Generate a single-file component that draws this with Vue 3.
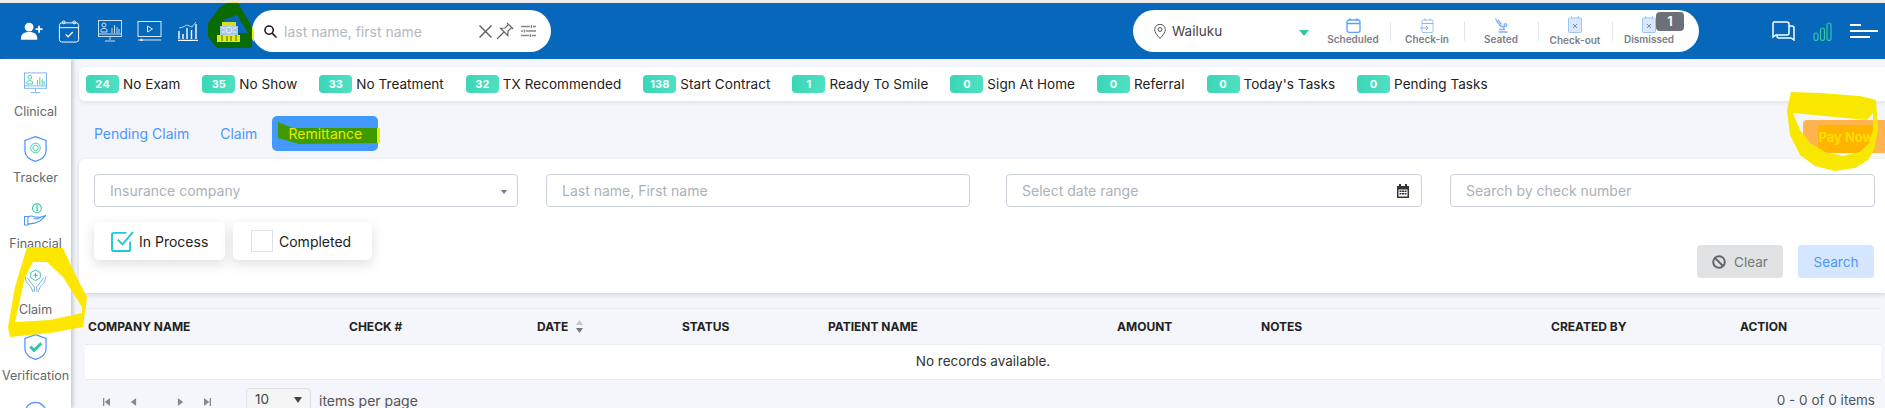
<template>
  <div class="app">
    <div class="strip"></div>

    <header class="topbar">
      <nav class="quick-icons">
        <svg class="q-user" viewBox="0 0 24 18" fill="#fff">
          <circle cx="9.500" cy="5" r="4.600" />
          <path d="M1 18c-.6-5.500 2.800-8 8.500-8s9 2.500 8.500 8z" />
          <path d="M19 3.500h1.800v2.700h2.700v1.800h-2.700v2.700H19V8h-2.700V6.200H19z" />
        </svg>
        <svg class="q-cal" viewBox="0 0 22 24" fill="none" stroke="#fff" stroke-width="1">
          <rect x="1" y="3" width="20" height="20" rx="2.500" />
          <path d="M1 8h20" />
          <circle cx="5.500" cy="2.500" r="1.500" /><circle cx="16.500" cy="2.500" r="1.500" />
          <path d="M7.500 15l2.500 2.500 5-5" stroke-width="1.300" />
        </svg>
        <svg class="q-mon" viewBox="0 0 24 22" fill="none" stroke="#dbe9f7" stroke-width=".9">
          <rect x=".5" y=".5" width="23" height="16" />
          <path d="M12 17v3M7 21h10M1 14h22" />
          <circle cx="6" cy="5" r="2" />
          <path d="M3 10c0-2 6-2 6 0v2H3zM14 13V8M16.500 13V5M19 13V7M21 13V9" />
        </svg>
        <svg class="q-vid" viewBox="0 0 24 20" fill="none" stroke="#dbe9f7" stroke-width="1">
          <rect x=".5" y=".5" width="23" height="15" />
          <path d="M10 5l5 3-5 3z" />
          <path d="M.5 19h23" /><circle cx="4" cy="19" r="1" fill="#dbe9f7" />
        </svg>
        <svg class="q-bars" viewBox="0 0 22 20" fill="none" stroke="#fff" stroke-width="1.400">
          <path d="M1 19.500h20" />
          <path d="M2 18V10M6 18V13M10 18V7M14.500 18V9M19 18V3" />
          <path d="M2 7l4-1 4-2 5 2 4-5" stroke-width=".7" />
        </svg>
      </nav>

      <div class="pill search-pill">
        <svg class="i-search" viewBox="0 0 14 14" fill="none" stroke="#111" stroke-width="1.600">
          <circle cx="5.500" cy="5.500" r="4.500" /><path d="M9 9l4.500 4.500" />
        </svg>
        <span class="search-text">last name, first name</span>
        <svg class="i-x" viewBox="0 0 13 13" fill="none" stroke="#666" stroke-width="1.500"><path d="M.5.500l12 12M12.500.500l-12 12" /></svg>
        <svg class="i-pin" viewBox="0 0 18 18" fill="none" stroke="#666" stroke-width="1.200">
          <path d="M11 .8l6.200 6.200M12.500 2.300L9 6 4.500 6.200l7.300 7.300L12 9l3.700-3.500M8 10l-7 7" />
        </svg>
        <svg class="i-sliders" viewBox="0 0 15 14" fill="none" stroke="#888" stroke-width="1.400">
          <path d="M0 2.500h9M12 2.500h3M0 7h2M5 7h10M0 11.500h8M11 11.500h4M10.500 1v3M3.500 5.500v3M9.500 10v3" />
        </svg>
      </div>

      <div class="pill status-pill">
        <svg class="i-loc" viewBox="0 0 12 15" fill="none" stroke="#555" stroke-width="1">
          <path d="M6 14.500C3 11 .7 8.500.7 5.600a5.300 5.300 0 0 1 10.600 0C11.300 8.500 9 11 6 14.500z" /><circle cx="6" cy="5.500" r="2" />
        </svg>
        <span class="loc-name">Wailuku</span>
        <span class="loc-caret"></span>
        <div class="status">
          <svg class="s-icon" viewBox="0 0 15 15" fill="none" stroke="#5aa0f8" stroke-width="1.300">
            <rect x="1" y="2" width="13" height="12.300" rx="2" />
            <path d="M1 5.500h13M4 .300v2M11 .300v2" />
          </svg>
          <span>Scheduled</span>
        </div>
        <div class="status sep">
          <svg class="s-icon" viewBox="0 0 15 15" fill="none" stroke="#9cc4f7" stroke-width="1">
            <rect x="2" y="2" width="11" height="12.500" rx="1" />
            <path d="M2 5.500h11M5 .500v2M10 .500v2M0 10h8M6 8l2 2-2 2" stroke="#86b5f5" />
          </svg>
          <span>Check-in</span>
        </div>
        <div class="status sep">
          <svg class="s-icon" viewBox="0 0 15 15" fill="none" stroke="#7fb2f6" stroke-width="1.300">
            <path d="M1.500.500l2 4 3.500 4h4.500M4 2l3.500 4.500" />
            <path d="M9 8.500l1.500 3H5M4.500 14h9" />
            <circle cx="11.500" cy="7" r="1.300" />
          </svg>
          <span>Seated</span>
        </div>
        <div class="status sep low">
          <svg class="s-icon tall" viewBox="0 0 14 17" fill="none" stroke="#9cc4f7" stroke-width="1">
            <rect x=".5" y="2" width="13" height="14.500" rx="1" fill="#d9e8fc" />
            <path d="M3.500 0v2.500M10.500 0v2.500" />
            <path d="M5 8l4 4M9 8l-4 4" stroke="#6f8fbd" />
          </svg>
          <span>Check-out</span>
        </div>
        <div class="status sep">
          <svg class="s-icon tall" viewBox="0 0 14 17" fill="none" stroke="#9cc4f7" stroke-width="1">
            <rect x=".5" y="2" width="13" height="14.500" rx="1" fill="#d9e8fc" />
            <path d="M3.500 0v2.500M10.500 0v2.500" />
            <path d="M5 8l4 4M9 8l-4 4" stroke="#6f8fbd" />
          </svg>
          <span>Dismissed</span>
        </div>
        <span class="count-badge">1</span>
      </div>

      <div class="right-icons">
        <svg class="r-chat" viewBox="0 0 24 20" fill="none" stroke="#fff" stroke-width="1.500">
          <path d="M3 1h13a2 2 0 0 1 2 2v9a2 2 0 0 1-2 2H5l-3 2V3a2 2 0 0 1 1-2z" />
          <path d="M18 5h3a2 2 0 0 1 2 2v12l-3-2H8a2 2 0 0 1-2-2v-1" />
        </svg>
        <svg class="r-bars" viewBox="0 0 19 19" fill="none" stroke="#2fc7a4" stroke-width="1.200">
          <rect x="1" y="11" width="4" height="7.500" rx="2" />
          <rect x="7.500" y="6" width="4" height="12.500" rx="2" />
          <rect x="14" y="1" width="4" height="17.500" rx="2" />
        </svg>
        <div class="r-menu"><i></i><i></i><i></i></div>
      </div>
    </header>

    <div class="body">
      <aside class="sidebar">
        <div class="side-item">
          <svg viewBox="0 0 24 22" fill="none" stroke="#6ea8f5" stroke-width=".9">
            <rect x=".5" y=".5" width="23" height="16" />
            <path d="M12 17v3M7 21h10M1 14h22" />
            <circle cx="6" cy="5" r="2" stroke="#2fc7a4" />
            <path d="M3 10c0-2 6-2 6 0v2H3zM14 13V8M16.500 13V5M19 13V7M21 13V9" stroke="#2fc7a4" />
          </svg>
          <span>Clinical</span>
        </div>
        <div class="side-item">
          <svg viewBox="0 0 24 28" fill="none" stroke="#4d94ff" stroke-width="1.300">
            <path d="M12 1l11 4v11c0 5-5 9-11 11C6 25 1 21 1 16V5z" />
            <circle cx="12" cy="13" r="5" stroke="#2fc7a4" stroke-width=".9" />
            <circle cx="12" cy="13" r="2.800" stroke="#2fc7a4" stroke-width=".9" />
          </svg>
          <span>Tracker</span>
        </div>
        <div class="side-item">
          <svg viewBox="0 0 24 24" fill="none" stroke="#4d94ff" stroke-width="1.100">
            <circle cx="13.500" cy="5" r="4.600" stroke="#2fc7a4" />
            <path d="M15 3c-2-.6-3 1.800-1.300 2.100s1.200 2.600-1 2M13.800 1.700v6.600" stroke="#2fc7a4" stroke-width=".8" />
            <path d="M.5 13.500h3.500v9H.5zM4 14.500c3-2.500 5-1.500 7-.5h3.500c1.500 0 1.500 2 0 2H10M15 15l8-2.500-6 5.500-6 2.500-7 1" />
          </svg>
          <span>Financial</span>
        </div>
        <div class="side-item">
          <svg viewBox="0 0 24 24" fill="none" stroke="#7fb2f6" stroke-width="1">
            <path d="M12 .500l5 2.800v5.400L12 11.500 7 8.700V3.300z" stroke="#2fc7a4" />
            <path d="M12 3.500v5M9.500 6h5" stroke="#2fc7a4" />
            <path d="M1 7l1.500 6 4.500 5 2.500 5.500M10.500 23.500l.5-5-4-5-3.500-5" stroke="#6fb5c8" />
            <path d="M23 7l-1.500 6-4.500 5-2.500 5.500M13.500 23.500l-.5-5 4-5 3.500-5" />
          </svg>
          <span>Claim</span>
        </div>
        <div class="side-item">
          <svg viewBox="0 0 24 28" fill="none" stroke="#4d94ff" stroke-width="1.300">
            <path d="M12 1l11 4v11c0 5-5 9-11 11C6 25 1 21 1 16V5z" />
            <path d="M6.500 13.500l4 4 7.500-7.500" stroke="#2fc7a4" stroke-width="3" />
          </svg>
          <span>Verification</span>
        </div>
        <div class="side-item">
          <svg viewBox="0 0 24 28" fill="none" stroke="#4d94ff" stroke-width="1.300">
            <circle cx="12" cy="14" r="11" />
          </svg>
        </div>
      </aside>

      <main class="main">
        <section class="summary">
          <div v-for="item in summary" :key="item.label" class="sum-item">
            <span class="sum-badge">{{ item.count }}</span>
            <span>{{ item.label }}</span>
          </div>
        </section>

        <div class="tabs-row">
          <span class="tab">Pending Claim</span>
          <span class="tab">Claim</span>
          <span class="tab active">
            <svg class="tab-mark" viewBox="0 0 108 24"><path d="M6 0l15 6h85l1 15-80 1L6 16z" fill="#3f9900" /><path d="M105 6h3l1 15h-4z" fill="#e6ee00" /></svg>
            <b>Remittance</b>
          </span>
          <button class="pay-now">Pay Now</button>
        </div>

        <section class="filters">
          <div class="filter-grid">
            <div class="field">
              <span class="ph">Insurance company</span>
              <span class="select-caret"></span>
            </div>
            <div class="field"><span class="ph">Last name, First name</span></div>
            <div class="field">
              <span class="ph">Select date range</span>
              <svg class="i-date" viewBox="0 0 12 14" fill="#333">
                <path d="M2 0h2v2h4V0h2v2h2v12H0V2h2zM1.500 5.500v7h9v-7z" />
                <path d="M2.500 6.500h2v1.500h-2zM5 6.500h2v1.500H5zM7.500 6.500h2v1.500h-2zM2.500 9h2v1.500h-2zM5 9h2v1.500H5zM7.500 9h2v1.500h-2z" />
              </svg>
            </div>
            <div class="field"><span class="ph">Search by check number</span></div>
          </div>

          <div class="filter-bottom">
            <div class="chips">
              <label class="chip first">
                <svg class="chk" viewBox="0 0 24 22" fill="none" stroke="#22c7d6" stroke-width="2">
                  <path d="M20 11v8a2 2 0 0 1-2 2H3a2 2 0 0 1-2-2V4a2 2 0 0 1 2-2h13" />
                  <path d="M7 9l5 5L23 1" />
                </svg>
                In Process
              </label>
              <label class="chip second"><span class="box"></span>Completed</label>
            </div>
            <div class="actions">
              <button class="btn-clear">
                <svg viewBox="0 0 14 14" fill="none" stroke="#666" stroke-width="2"><circle cx="7" cy="7" r="5.800" /><path d="M3 3l8 8" /></svg>
                Clear
              </button>
              <button class="btn-search">Search</button>
            </div>
          </div>
        </section>

        <section class="grid-wrap">
          <div class="grid-head">
            <span v-for="col in columns" :key="col.label" :style="{ width: col.width + 'px' }">
              {{ col.label }}
              <svg v-if="col.sort" class="i-sort" viewBox="0 0 7 13"><path d="M3.500 0L7 5H0z" fill="#c3c7cf" /><path d="M3.500 13L0 8h7z" fill="#777" /></svg>
            </span>
          </div>
          <div class="grid-empty">No records available.</div>
          <div class="grid-foot">
            <div class="pager">
              <svg viewBox="0 0 8 9" fill="#888"><path d="M0 0h1.500v9H0zM8 0v9L2 4.500z" /></svg>
              <svg viewBox="0 0 8 9" fill="#888"><path d="M7 0v9L1 4.500z" /></svg>
              <svg class="gap" viewBox="0 0 8 9" fill="#888"><path d="M1 0v9l6-4.500z" /></svg>
              <svg viewBox="0 0 8 9" fill="#888"><path d="M8 0H6.500v9H8zM0 0v9l6-4.500z" /></svg>
            </div>
            <div class="page-size"><span>10</span><i></i></div>
            <span class="per-page">items per page</span>
            <span class="total">0 - 0 of 0 items</span>
          </div>
        </section>
      </main>
    </div>

    <!-- hand drawn marks on top of the screenshot -->
    <svg class="marks" viewBox="0 0 1885 408">
      <path d="M227 3l10-1 2 3-10 1z" fill="#f2f000" />
      <path fill-rule="evenodd" fill="#0b6b00" d="M227 3L238 3L250 23L252 30L252 48L217 48L208 37L208 23L220 7ZM237 15L223 20L236 33L248 33Z" />
      <path d="M252 27l2 3 0 12-2-3z" fill="#f2f000" />
      <rect x="222" y="22" width="14" height="4" fill="#d8e020" />
      <rect x="220" y="26" width="18" height="9" fill="#a9c8e6" />
      <circle cx="229" cy="30" r="3" fill="none" stroke="#eaf3fb" />
      <path d="M222 28h3M233 28h3M222 32h3M233 32h3" stroke="#eaf3fb" />
      <rect x="217" y="35" width="23" height="7" fill="#e6ea10" />
      <path d="M222 35v6M227 36v5M231 36v5M236 35v6" stroke="#3a6a10" />
      <path fill-rule="evenodd" fill="#fde600" d="M27 247L63 248L72 268L87 297L83 327L50 333L10 337L8 327L15 287ZM33 262L25 277L15 322L50 320L82 313L82 307L63 277L47 262Z" />
      <path fill-rule="evenodd" fill="#f8e800" d="M1791 92L1820 93L1860 96L1876 100L1878 130L1874 150L1868 160L1855 168L1835 171L1815 166L1800 155L1790 135L1787 110ZM1793 113L1800 130L1810 143L1825 152L1843 156L1860 152L1870 142L1873 130L1873 113L1867 120Z" />
    </svg>
  </div>
</template>

<script setup>
const summary = [
  { count: 24, label: 'No Exam' },
  { count: 35, label: 'No Show' },
  { count: 33, label: 'No Treatment' },
  { count: 32, label: 'TX Recommended' },
  { count: 138, label: 'Start Contract' },
  { count: 1, label: 'Ready To Smile' },
  { count: 0, label: 'Sign At Home' },
  { count: 0, label: 'Referral' },
  { count: 0, label: "Today's Tasks" },
  { count: 0, label: 'Pending Tasks' }
]

const columns = [
  { label: 'COMPANY NAME', width: 261 },
  { label: 'CHECK #', width: 188 },
  { label: 'DATE', width: 145, sort: true },
  { label: 'STATUS', width: 146 },
  { label: 'PATIENT NAME', width: 289 },
  { label: 'AMOUNT', width: 144 },
  { label: 'NOTES', width: 290 },
  { label: 'CREATED BY', width: 189 },
  { label: 'ACTION', width: 100 }
]
</script>

<style>
html,
body {
  margin: 0;
  background: #f4f6fb;
}
</style>

<style scoped>
.app {
  position: relative;
  width: 1885px;
  height: 408px;
  overflow: hidden;
  font-family: Inter, "Open Sans", sans-serif;
  font-size: 13px;
  color: #222;
  background: #f4f6fb;
}

.strip {
  height: 3px;
  background: #ececec;
}

.topbar {
  height: 56px;
  background: #0767bb;
  display: flex;
  align-items: center;
}

.quick-icons {
  width: 252px;
  flex-shrink: 0;
  display: flex;
  align-items: center;
  padding-left: 20px;
  box-sizing: border-box;
}

.q-user { width: 23px; height: 18px; margin-right: 15px; }
.q-cal { width: 22px; height: 23px; margin-right: 18px; }
.q-mon { width: 24px; height: 22px; margin-right: 15px; }
.q-vid { width: 25px; height: 20px; margin-right: 15px; }
.q-bars { width: 22px; height: 20px; }

.pill {
  height: 42px;
  background: #fff;
  border-radius: 21px;
  display: flex;
  align-items: center;
  box-sizing: border-box;
}

.search-pill {
  width: 299px;
  padding-left: 12px;
}

.i-search { width: 13px; height: 13px; margin-right: 7px; }

.search-text {
  width: 195px;
  color: #b4b7bd;
  font-size: 14px;
  white-space: nowrap;
}

.i-x { width: 13px; height: 13px; margin-right: 4px; }
.i-pin { width: 18px; height: 18px; margin-right: 7px; }
.i-sliders { width: 15px; height: 14px; }

.status-pill {
  position: relative;
  width: 566px;
  margin-left: 582px;
  padding-left: 21px;
}

.i-loc { width: 12px; height: 15px; margin-right: 6px; }

.loc-name {
  width: 127px;
  font-size: 13.500px;
  color: #444;
}

.loc-caret {
  width: 0;
  height: 0;
  border-left: 5.500px solid transparent;
  border-right: 5.500px solid transparent;
  border-top: 6px solid #2fc7a4;
  margin-right: 7px;
  margin-top: 3px;
}

.status {
  position: relative;
  height: 27px;
  width: 74px;
  flex-shrink: 0;
  display: flex;
  flex-direction: column;
  align-items: center;
  justify-content: space-between;
  font-size: 10px;
  line-height: 11px;
  font-weight: 600;
  color: #7a7f87;
  white-space: nowrap;
}

.status.sep::before {
  content: "";
  position: absolute;
  left: 0;
  top: 4px;
  height: 19px;
  width: 1px;
  background: #e2e5ea;
}

.status.low span { position: relative; top: 1px; }

.s-icon { width: 15px; height: 15px; }
.s-icon.tall { width: 14px; height: 17px; margin-top: -2px; }

.count-badge {
  position: absolute;
  left: 523px;
  top: 2px;
  width: 28px;
  height: 19px;
  border-radius: 4px;
  background: #6c7078;
  color: #fff;
  font-weight: 600;
  text-align: center;
  line-height: 19px;
}

.right-icons {
  display: flex;
  align-items: center;
  margin-left: 72px;
}

.r-chat { width: 24px; height: 20px; margin-right: 18px; }
.r-bars { width: 19px; height: 19px; margin-right: 18px; }

.r-menu {
  width: 28px;
  display: flex;
  flex-direction: column;
  align-items: flex-start;
  gap: 4px;
}

.r-menu i { height: 2px; background: #fff; display: block; }
.r-menu i:nth-child(1) { width: 11px; }
.r-menu i:nth-child(2) { width: 28px; }
.r-menu i:nth-child(3) { width: 20px; }

.body {
  display: flex;
  height: 349px;
}

.sidebar {
  width: 71px;
  flex-shrink: 0;
  background: #fff;
  box-shadow: 2px 0 4px rgba(120, 125, 140, 0.4);
  padding-top: 7px;
  box-sizing: border-box;
  overflow: hidden;
  position: relative;
}

.side-item {
  height: 66px;
  display: flex;
  flex-direction: column;
  align-items: center;
  font-size: 12.500px;
  line-height: 16px;
  color: #666;
  white-space: nowrap;
}

.side-item svg { width: 23px; height: 34px; flex-shrink: 0; margin-bottom: 4px; }

.main {
  flex: 1;
  min-width: 0;
  padding: 8px 0 0 8px;
}

.summary {
  height: 34px;
  background: #fff;
  border-radius: 6px 0 0 6px;
  box-shadow: 0 2px 4px rgba(120, 125, 140, 0.15);
  display: flex;
  align-items: center;
  gap: 22px;
  padding-left: 7px;
  font-size: 13.500px;
  letter-spacing: 0.05px;
  white-space: nowrap;
}

.sum-item {
  display: flex;
  align-items: center;
  gap: 4px;
}

.sum-badge {
  width: 33px;
  height: 18px;
  line-height: 18px;
  border-radius: 4px;
  background: linear-gradient(90deg, #3bd6b6, #4fe0c2);
  color: #fff;
  font-size: 11px;
  font-weight: 700;
  text-align: center;
}

.tabs-row {
  height: 58px;
  display: flex;
  align-items: flex-start;
  padding-top: 15px;
  box-sizing: border-box;
  position: relative;
  padding-left: 15px;
}

.tab {
  height: 35px;
  line-height: 35px;
  color: #4d94ff;
  margin-right: 31px;
  font-size: 14px;
}

.tab.active {
  position: relative;
  width: 106px;
  margin-left: -16px;
  background: #4499ff;
  border-radius: 5px;
  text-align: center;
  color: #e6ee00;
}

.tab.active b {
  position: relative;
  font-weight: 400;
}

.tab-mark {
  position: absolute;
  left: 0;
  top: 6px;
  width: 108px;
  height: 24px;
}

.pay-now {
  position: absolute;
  right: 0;
  top: 19px;
  width: 82px;
  height: 33px;
  border: 0;
  border-radius: 4px 0 0 4px;
  background: linear-gradient(#ffb400, #ffb400) 15px 5px / 56px 28px no-repeat, #ffb44f;
  color: #ffe100;
  font: 600 13px Inter, sans-serif;
  padding: 0 0 0 4px;
}

.filters {
  height: 134px;
  background: #fff;
  border-radius: 6px 0 0 0;
  box-shadow: 0 2px 4px rgba(120, 125, 140, 0.25);
  padding: 15px 10px 0 15px;
  box-sizing: border-box;
}

.filter-grid {
  display: grid;
  grid-template-columns: 424px 424px 424px 425px;
  column-gap: 28px;
}

.filter-grid .field:nth-child(3) { margin-left: 8px; width: 416px; }

.field {
  height: 33px;
  border: 1px solid #ccd2d9;
  border-radius: 4px;
  display: flex;
  align-items: center;
  padding: 0 12px 0 15px;
  box-sizing: border-box;
  position: relative;
}

.ph { color: #adb1b8; font-size: 14px; }

.select-caret {
  position: absolute;
  right: 10px;
  top: 15px;
  border-left: 3.500px solid transparent;
  border-right: 3.500px solid transparent;
  border-top: 4px solid #777;
}

.i-date { width: 12px; height: 14px; margin-left: auto; }

.filter-bottom {
  display: flex;
  justify-content: space-between;
  align-items: flex-start;
  margin-top: 15px;
}

.chips {
  display: flex;
  gap: 8px;
}

.chip {
  height: 38px;
  background: #fff;
  border-radius: 5px;
  box-shadow: 0 4px 12px rgba(120, 125, 140, 0.25);
  display: flex;
  align-items: center;
  box-sizing: border-box;
  font-size: 14px;
  color: #222;
}

.chip.first { width: 131px; padding-left: 17px; }
.chip.second { width: 139px; padding-left: 18px; }
.chk { width: 23px; height: 21px; margin-right: 5px; }

.box {
  width: 20px;
  height: 20px;
  border: 1px solid #dfe2e6;
  margin-right: 6px;
}

.actions {
  display: flex;
  gap: 15px;
  margin-top: 23px;
  padding-right: 1px;
}

.actions button {
  height: 33px;
  border: 0;
  border-radius: 4px;
  font: 400 13.500px Inter, sans-serif;
  display: flex;
  align-items: center;
  justify-content: center;
}

.btn-clear { width: 86px; background: #e1e2e4; color: #777; }
.btn-clear svg { width: 14px; height: 14px; margin-right: 8px; }
.btn-search { width: 76px; background: #d5e7ff; color: #4d94ff; }

.grid-wrap {
  margin: 15px 4px 0 6px;
}

.grid-head {
  height: 37px;
  border-top: 1px solid #e8eaee;
  border-bottom: 1px solid #e8eaee;
  box-sizing: border-box;
  display: flex;
  align-items: center;
  padding-left: 3px;
  font-size: 12px;
  font-weight: 700;
  color: #222;
  white-space: nowrap;
}

.grid-head span {
  flex-shrink: 0;
  display: flex;
  align-items: center;
  gap: 8px;
}

.i-sort { width: 7px; height: 13px; }

.grid-empty {
  height: 35px;
  line-height: 33px;
  background: #fff;
  border-bottom: 1px solid #e8eaee;
  box-sizing: border-box;
  text-align: center;
  font-size: 13.500px;
  color: #333;
}

.grid-foot {
  height: 29px;
  display: flex;
  align-items: flex-start;
  padding-top: 8px;
  box-sizing: border-box;
  font-size: 13.500px;
  line-height: 15px;
  color: #555;
  white-space: nowrap;
}

.pager {
  display: flex;
  align-items: center;
  height: 28px;
  padding-left: 18px;
  width: 161px;
  box-sizing: border-box;
  gap: 20px;
}

.pager svg { width: 7px; height: 8px; }
.pager .gap { margin-left: 20px; }

.page-size {
  width: 65px;
  height: 32px;
  border: 1px solid #dfe2e6;
  border-radius: 4px;
  background: #f5f5f5;
  box-sizing: border-box;
  padding: 3px 8px;
  display: flex;
  justify-content: space-between;
  align-items: flex-start;
  color: #444;
}

.page-size i {
  margin-top: 5px;
  border-left: 4px solid transparent;
  border-right: 4px solid transparent;
  border-top: 6px solid #444;
}

.per-page { margin-left: 8px; margin-top: 5px; font-size: 14px; }
.total { margin-left: auto; margin-right: 6px; margin-top: 5px; }

.marks {
  position: absolute;
  left: 0;
  top: 0;
  width: 1885px;
  height: 408px;
  pointer-events: none;
}
</style>
